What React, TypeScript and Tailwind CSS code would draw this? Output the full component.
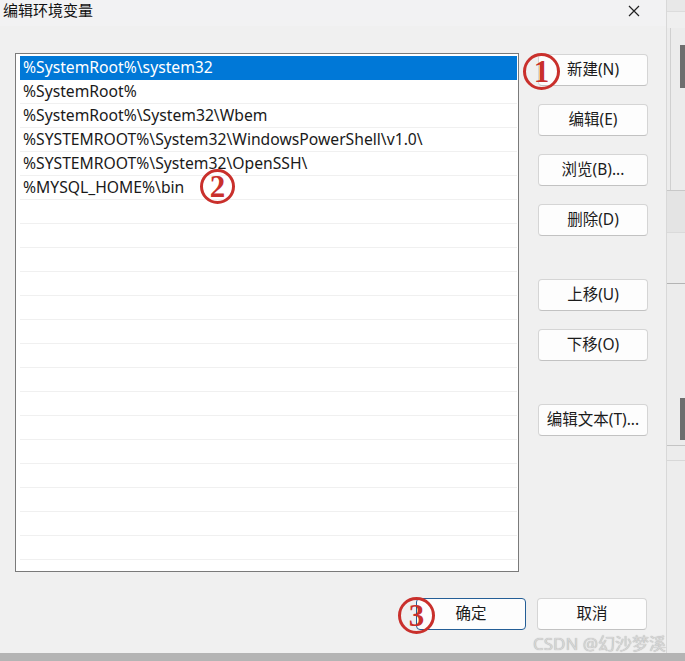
import React from "react";

const paths = [
  "%SystemRoot%\\system32",
  "%SystemRoot%",
  "%SystemRoot%\\System32\\Wbem",
  "%SYSTEMROOT%\\System32\\WindowsPowerShell\\v1.0\\",
  "%SYSTEMROOT%\\System32\\OpenSSH\\",
  "%MYSQL_HOME%\\bin",
];

const font = { fontFamily: '"Noto Sans", "Noto Sans CJK SC", sans-serif' };

function SideButton({ label, className = "" }: { label: string; className?: string }) {
  return (
    <button
      className={`w-[110px] h-[32px] rounded-[4px] border border-[#d5d5d5] border-b-[#c2c2c2] bg-[#fdfdfd] text-[15.5px] text-[#1b1b1b] ${className}`}
    >
      {label}
    </button>
  );
}

function Marker({ n, className }: { n: string; className: string }) {
  return (
    <div
      className={`absolute flex items-center justify-center rounded-full border-[3px] border-[#c9302c] text-[#c9302c] text-[31px] font-bold leading-none ${className}`}
      style={{ fontFamily: '"Liberation Serif", serif' }}
    >
      {n}
    </div>
  );
}

export default function App() {
  const rows = Array.from({ length: 22 }, (_, i) => paths[i] ?? "");

  return (
    <div className="relative w-[685px] h-[661px] overflow-hidden bg-[#b4b4b4]" style={font}>
      <div className="flex h-[653px]">
        {/* Dialog */}
        <div className="w-[667px] h-full bg-[#f0f0f0] flex flex-col border-r border-[#d8d8d8]">
          {/* Title bar */}
          <div className="h-[26px] flex items-start justify-between pl-[3px] pr-[26px] bg-[#f2f2f3]">
            <span className="text-[15px] leading-[20px] text-[#111]">编辑环境变量</span>
            <svg width="12" height="12" viewBox="0 0 12 12" className="mt-[5px]">
              <path d="M1 1L11 11M11 1L1 11" stroke="#222" strokeWidth="1.2" />
            </svg>
          </div>

          <div className="flex pl-[15px] pt-[27px]">
            {/* List box */}
            <div className="w-[504px] h-[519px] border border-[#7a7a7a] bg-white pt-[2px] pl-[4px] pr-[1px] overflow-hidden">
              {rows.map((p, i) => (
                <div
                  key={i}
                  className={`h-[24px] flex items-center pl-[3px] text-[15.7px] whitespace-nowrap ${
                    i === 0
                      ? "bg-[#0078d7] text-white"
                      : "text-[#1a1a1a] border-b border-[#f0f0f0]"
                  }`}
                >
                  {p}
                </div>
              ))}
            </div>

            {/* Buttons column */}
            <div className="flex flex-col ml-[19px] pt-[1px]">
              <SideButton label="新建(N)" />
              <SideButton label="编辑(E)" className="mt-[18px]" />
              <SideButton label="浏览(B)..." className="mt-[18px]" />
              <SideButton label="删除(D)" className="mt-[18px]" />
              <SideButton label="上移(U)" className="mt-[43px]" />
              <SideButton label="下移(O)" className="mt-[18px]" />
              <SideButton label="编辑文本(T)..." className="mt-[43px]" />
            </div>
          </div>

          {/* Bottom buttons */}
          <div className="flex justify-end gap-[11px] pr-[19px] mt-[26px]">
            <button className="w-[110px] h-[32px] rounded-[4px] border border-[#245e96] bg-[#fdfdfd] text-[15.5px] text-[#1b1b1b]">
              确定
            </button>
            <SideButton label="取消" />
          </div>
        </div>

        {/* Background window strip */}
        <div className="flex-1 flex flex-col bg-[#ececec]">
          <div className="h-[12px] bg-[#e8e8e8] border-b border-[#dcdcdc]" />
          <div className="h-[16px] bg-[#efefef]" />
          <div className="h-[162px] border-l border-[#d0d0d0] ml-[3px] flex flex-col pt-[17px] items-end">
            <div className="w-[5px] h-[43px] bg-[#6e6e6e]" />
          </div>
          <div className="h-[42px] bg-[#e4e4e4] border-t border-[#c8c8c8]" />
          <div className="h-[51px] bg-[#ebebeb] border-t border-[#dadada]" />
          <div className="h-[162px] border-t border-[#b4b4b4] flex flex-col pt-[114px] items-end">
            <div className="w-[5px] h-[42px] bg-[#6e6e6e]" />
          </div>
          <div className="h-[15px] border-t border-[#c4c4c4]" />
          <div className="flex-1 border-t border-[#d8d8d8] bg-[#ededed]" />
        </div>
      </div>

      {/* Annotation markers */}
      <Marker n="1" className="left-[523px] top-[53px] w-[37px] h-[37px]" />
      <Marker n="2" className="left-[200px] top-[169px] w-[35px] h-[35px]" />
      <Marker n="3" className="left-[398px] top-[597px] w-[37px] h-[37px]" />

      {/* Watermark */}
      <div
        className="absolute left-[533px] top-[631px] text-[17px] text-[#d6d6d6] whitespace-nowrap"
        style={{ textShadow: "0 0 1px #a0a0a0" }}
      >
        CSDN @幻沙梦溪
      </div>
    </div>
  );
}
